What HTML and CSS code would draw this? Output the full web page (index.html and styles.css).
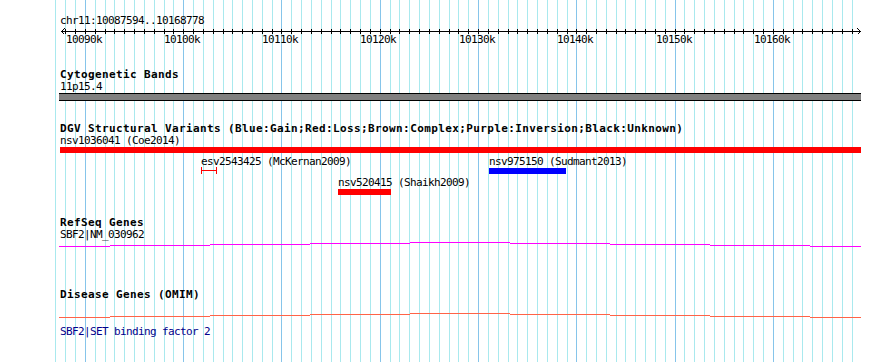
FILE: index.html
```html
<!DOCTYPE html>
<html>
<head>
    <title>chr11:10087594..10168778</title>
    <link rel="stylesheet" href="styles.css">
</head>
<body>
    <div class="panel">
        <div class="grid"></div>

        <div class="ruler">
            <div class="chrom-label">chr11:10087594..10168778</div>
            <div class="axis">
                <svg class="arrow arrow-left" width="4" height="7" viewBox="0 0 4 7"><polyline points="3.5,0.5 0.5,3.5 3.5,6.5"/></svg>
                <svg class="arrow arrow-right" width="4" height="7" viewBox="0 0 4 7"><polyline points="0.5,0.5 3.5,3.5 0.5,6.5"/></svg>
            </div>
            <div class="tick-labels">
                <span style="left: 66px">10090k</span>
                <span style="left: 164px">10100k</span>
                <span style="left: 262px">10110k</span>
                <span style="left: 360px">10120k</span>
                <span style="left: 459px">10130k</span>
                <span style="left: 557px">10140k</span>
                <span style="left: 656px">10150k</span>
                <span style="left: 754px">10160k</span>
            </div>
        </div>

        <!-- cytobands -->
        <div class="track cyto">
            <div class="track-title">Cytogenetic Bands</div>
            <div class="feature-label">11p15.4</div>
            <div class="band"></div>
        </div>

        <!-- DGV -->
        <div class="track dgv">
            <div class="track-title">DGV Structural Variants (Blue:Gain;Red:Loss;Brown:Complex;Purple:Inversion;Black:Unknown)</div>
            <div class="feature-label">nsv1036041 (Coe2014)</div>
            <div class="variant-bar loss full-span"></div>
            <div class="lane">
                <div class="lane-row">
                    <div class="feature" style="left: 201px">
                        <div class="feature-label">esv2543425 (McKernan2009)</div>
                        <div class="range-mark" style="width: 16px"></div>
                    </div>
                    <div class="feature" style="left: 489px">
                        <div class="feature-label">nsv975150 (Sudmant2013)</div>
                        <div class="variant-bar gain" style="width: 77px"></div>
                    </div>
                </div>
                <div class="lane-row">
                    <div class="feature" style="left: 338px">
                        <div class="feature-label">nsv520415 (Shaikh2009)</div>
                        <div class="variant-bar loss" style="width: 53px"></div>
                    </div>
                </div>
            </div>
        </div>

        <!-- RefSeq -->
        <div class="track refseq">
            <div class="track-title">RefSeq Genes</div>
            <div class="feature-label">SBF2|NM_030962</div>
            <svg class="gene-line refseq-line" width="802" height="5" viewBox="0 0 802 5">
                <rect x="0" y="4" width="51" height="1"/>
                <rect x="51" y="3" width="100" height="1"/>
                <rect x="151" y="2" width="100" height="1"/>
                <rect x="251" y="1" width="100" height="1"/>
                <rect x="351" y="0" width="100" height="1"/>
                <rect x="451" y="1" width="100" height="1"/>
                <rect x="551" y="2" width="100" height="1"/>
                <rect x="651" y="3" width="100" height="1"/>
                <rect x="751" y="4" width="51" height="1"/>
            </svg>
        </div>

        <!-- OMIM -->
        <div class="track omim">
            <div class="track-title">Disease Genes (OMIM)</div>
            <svg class="gene-line omim-line" width="802" height="5" viewBox="0 0 802 5">
                <rect x="0" y="4" width="51" height="1"/>
                <rect x="51" y="3" width="100" height="1"/>
                <rect x="151" y="2" width="100" height="1"/>
                <rect x="251" y="1" width="100" height="1"/>
                <rect x="351" y="0" width="100" height="1"/>
                <rect x="451" y="1" width="100" height="1"/>
                <rect x="551" y="2" width="100" height="1"/>
                <rect x="651" y="3" width="100" height="1"/>
                <rect x="751" y="4" width="51" height="1"/>
            </svg>
            <div class="feature-label omim-label">SBF2|SET binding factor 2</div>
        </div>
    </div>
</body>
</html>
```

FILE: styles.css
```css
body {
    margin: 0;
    background-color: #fff;
}

.panel {
    position: relative;
    width: 890px;
    height: 362px;
    overflow: hidden;
    font-family: "DejaVu Sans Mono", monospace;
    font-size: 11px;
    line-height: 12px;
    letter-spacing: -0.62px;
    color: #000;
}

/* 1kb grid lines, darker every 10kb */
.grid {
    position: absolute;
    left: 55px;
    top: 0;
    width: 798px;
    height: 362px;
    background-image:
        repeating-linear-gradient(90deg, transparent 0 29.9px, #86c5ea 29.9px 30.9px, transparent 30.9px 98.286px),
        repeating-linear-gradient(90deg, transparent 0 0.414px, #a9e9ee 0.414px 1.414px, transparent 1.414px 9.8286px);
}

.ruler,
.track {
    position: relative;
}

.ruler {
    padding-top: 15px;
}

.chrom-label {
    padding-left: 60px;
}

.axis {
    position: relative;
    margin: 2px 0 0 61px;
    width: 800px;
    height: 5px;
    background-image:
        linear-gradient(#000, #000),
        repeating-linear-gradient(90deg, transparent 0 4.243px, #000 4.243px 5.243px, transparent 5.243px 9.8286px);
    background-size: 100% 1px, 100% 100%;
    background-position: 0 2px, 0 0;
    background-repeat: no-repeat;
}

.arrow {
    position: absolute;
    top: -1px;
    display: block;
    shape-rendering: crispEdges;
}

.arrow polyline {
    fill: none;
    stroke: #000;
    stroke-width: 1;
}

.arrow-left {
    left: 0;
}

.arrow-right {
    left: 796px;
}

.tick-labels {
    position: relative;
    height: 12px;
}

.tick-labels span {
    position: absolute;
    top: 0;
    white-space: nowrap;
}

.track-title {
    padding-left: 60px;
    font-weight: bold;
    letter-spacing: 0.38px;
    white-space: nowrap;
}

.feature-label {
    padding-left: 60px;
    white-space: nowrap;
}

.cyto {
    margin-top: 23px;
}

.band {
    margin-left: 59px;
    width: 802px;
    height: 6px;
    background-color: #808080;
    border-top: 1px solid #000;
    border-bottom: 1px solid #000;
}

.dgv {
    margin-top: 22px;
}

.variant-bar {
    height: 6px;
}

.loss {
    background-color: #f00;
}

.gain {
    background-color: #00f;
}

.full-span {
    margin-left: 60px;
    width: 801px;
}

.lane {
    padding-top: 3px;
}

.lane-row {
    position: relative;
    height: 21px;
}

.feature {
    position: absolute;
    top: 0;
}

.feature .feature-label {
    padding-left: 0;
}

.range-mark {
    box-sizing: border-box;
    margin-top: -1px;
    height: 7px;
    border-left: 1px solid #f00;
    border-right: 1px solid #f00;
    background: linear-gradient(#f00, #f00) 0 3px / 100% 1px no-repeat;
}

.refseq {
    margin-top: 19px;
}

.gene-line {
    display: block;
    margin: 1px 0 0 59px;
    shape-rendering: crispEdges;
}

.refseq-line rect {
    fill: #f0f;
}

.omim {
    margin-top: 42px;
}

.omim-line {
    margin-top: 12px;
}

.omim-line rect {
    fill: #ff6347;
}

.omim-label {
    margin-top: 8px;
    color: #00008b;
}
```
